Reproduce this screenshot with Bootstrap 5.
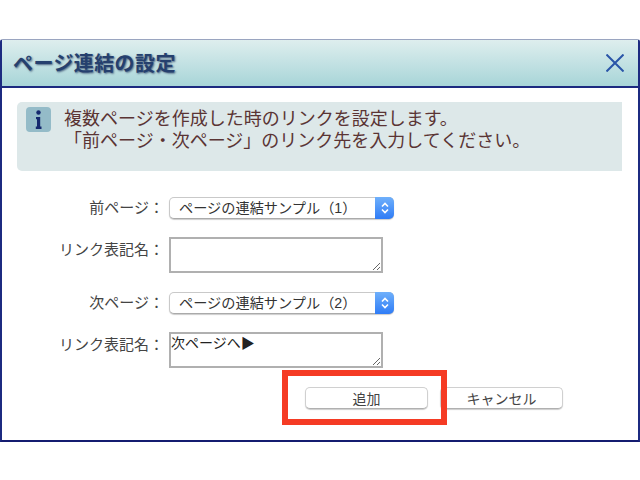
<!DOCTYPE html>
<html lang="ja">
<head>
  <meta charset="UTF-8">
  <title>ページ連結の設定</title>
  <link href="https://cdn.jsdelivr.net/npm/bootstrap@5.3.0/dist/css/bootstrap.min.css" rel="stylesheet">
  <style>
    body { background: #fff; font-family: "Liberation Sans", "Noto Sans CJK JP", sans-serif; color: #333; overflow: hidden; }
    .dlg { margin: 39px 0 0 0; width: 640px; height: 403px; border: 1px solid #9aa5c0; border-left: 2px solid #1c2a80; border-right: 2px solid #1c2a80; border-bottom: 2px solid #141c70; border-radius: 3px 3px 0 0; position: relative; background: #fff; }
    .dlg-head { height: 48px; background: linear-gradient(#deeeee, #a8d5d8); border-bottom: 2px solid #1c2a80; padding: 0 14px 0 11px; }
    .dlg-title { font-size: 20px; font-weight: 700; color: #25406e; text-shadow: 1px 1px 2px #4d6482; letter-spacing: .4px; padding-top: 2px; }
    .dlg-body { padding: 14px 16px 0 15px; }
    .note { height: 69px; background: #dde8e9; border-radius: 5px 0 0 5px; padding: 5px 9px; }
    .note-icon { width: 25px; height: 25px; background: #94bbc8; border-radius: 4px; flex: none; }
    .note-text { font-size: 18px; line-height: 22px; color: #5a3434; margin-left: 13px; margin-top: 1px; white-space: nowrap; }
    .fields { margin-top: 26px; }
    .field-label { width: 152px; flex: none; text-align: right; font-size: 15px; line-height: 22px; color: #444; padding-right: 5px; white-space: nowrap; }
    .row-b .field-label { padding-top: 2px; }
    .sel-wrap { position: relative; width: 225px; height: 22px; }
    .sel { appearance: none; -webkit-appearance: none; width: 100%; height: 22px; border: 1px solid #c9c9c9; border-bottom-color: #aaa; border-radius: 5px; background: #fff; font-size: 14.2px; font-family: inherit; color: #333; padding: 0 0 0 9px; box-shadow: 0 1px 1px #ccc; display: block; outline: none; }
    .sel-arrow { position: absolute; right: 0; top: 0; width: 19px; height: 22px; background: linear-gradient(#6fb0fb, #2f7cf6); border-radius: 0 5px 5px 0; display: flex; align-items: center; justify-content: center; pointer-events: none; }
    .memo { width: 214px; height: 36px; border: 2px solid #b0b0b0; font-size: 14px; line-height: 19px; color: #222; padding: 0; display: block; outline: none; border-radius: 0; font-family: inherit; background: #fff; }
    .row-a { margin-bottom: 18px; }
    .row-b { margin-bottom: 19px; }
    .row-b:last-child { margin-bottom: 0; }
    .actions { margin-top: 19px; padding-left: 288px; gap: 12px; }
    .act { width: 123px; height: 22px; border: 1px solid #d0d0d0; border-bottom-color: #b0b0b0; border-radius: 5px; background: #fff; font-size: 14px; line-height: 20px; padding: 1px 0 0; color: #444; box-shadow: 0 1px 1px #ccc; }
    .mark-box { position: absolute; left: 280px; top: 330px; width: 165px; height: 55px; border: 6px solid #f53b24; pointer-events: none; }
  </style>
</head>
<body>

<div class="dlg">
  <div class="dlg-head d-flex align-items-center justify-content-between">
    <div class="dlg-title">ページ連結の設定</div>
    <svg width="18" height="18" viewBox="0 0 18 18"><path d="M.5.5 17.5 17.5M17.5.5 .5 17.5" stroke="#2a55a8" stroke-width="2" fill="none"/></svg>
  </div>
  <div class="dlg-body">
    <div class="note d-flex">
      <div class="note-icon d-flex align-items-center justify-content-center">
        <svg width="7" height="19" viewBox="0 0 7 19"><circle cx="3.5" cy="2.5" r="2.2" fill="#14286e"/><path d="M1 7h4.2v9.5H6.5V19H.8v-2.5H2V9.3H1z" fill="#14286e"/></svg>
      </div>
      <div class="note-text">複数ページを作成した時のリンクを設定します。<br>「前ページ・次ページ」のリンク先を入力してください。</div>
    </div>

    <div class="fields">
      <div class="d-flex row-a">
        <label class="field-label">前ページ：</label>
        <div class="sel-wrap">
          <select class="sel"><option>ページの連結サンプル（1）</option></select>
          <span class="sel-arrow"><svg width="10" height="14" viewBox="0 0 10 14"><path d="M2 5.5 5 2.5 8 5.5M2 8.5 5 11.5 8 8.5" stroke="#fff" stroke-width="1.6" fill="none"/></svg></span>
        </div>
      </div>
      <div class="d-flex row-b">
        <label class="field-label">リンク表記名：</label>
        <textarea class="memo"></textarea>
      </div>
      <div class="d-flex row-a">
        <label class="field-label">次ページ：</label>
        <div class="sel-wrap">
          <select class="sel"><option>ページの連結サンプル（2）</option></select>
          <span class="sel-arrow"><svg width="10" height="14" viewBox="0 0 10 14"><path d="M2 5.5 5 2.5 8 5.5M2 8.5 5 11.5 8 8.5" stroke="#fff" stroke-width="1.6" fill="none"/></svg></span>
        </div>
      </div>
      <div class="d-flex row-b">
        <label class="field-label">リンク表記名：</label>
        <textarea class="memo">次ページへ▶</textarea>
      </div>
    </div>

    <div class="d-flex actions">
      <button type="button" class="act">追加</button>
      <button type="button" class="act">キャンセル</button>
    </div>
  </div>
  <div class="mark-box"></div>
</div>

<script src="https://cdn.jsdelivr.net/npm/bootstrap@5.3.0/dist/js/bootstrap.bundle.min.js"></script>
</body>
</html>
